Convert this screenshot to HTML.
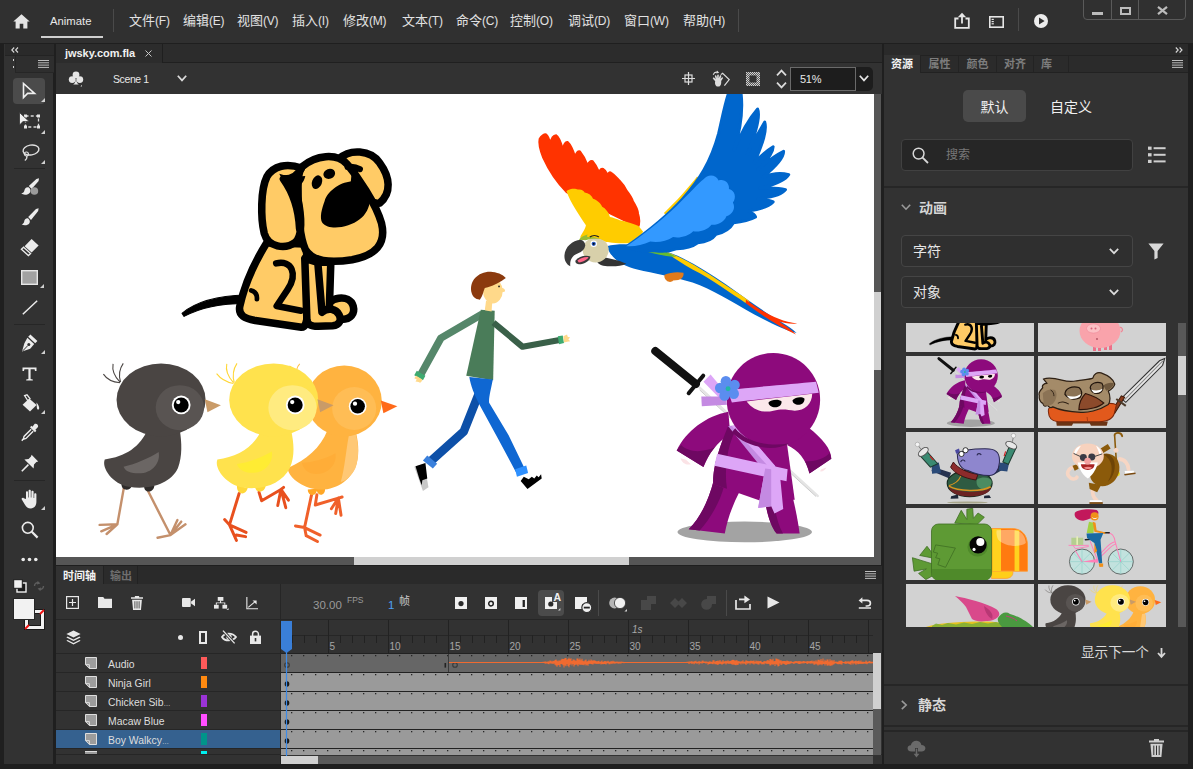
<!DOCTYPE html>
<html lang="zh-CN">
<head>
<meta charset="utf-8">
<title>Animate - jwsky.com.fla</title>
<style>
*{box-sizing:border-box;margin:0;padding:0}
html,body{width:1193px;height:769px;overflow:hidden;background:#1f1f1f}
body{position:relative;font-family:"Liberation Sans","Noto Sans CJK SC",sans-serif;font-size:13px;color:#dcdcdc;-webkit-font-smoothing:antialiased}
.abs{position:absolute}
svg{position:absolute;overflow:visible}
/* top bar */
#topbar{left:0;top:0;width:1193px;height:43px;background:#303030}
#topbar .mi{position:absolute;top:12px;height:18px;line-height:18px;font-size:13px;color:#e2e2e2;white-space:nowrap}
.vdiv{position:absolute;width:1px;background:#4a4a4a}
#winctl{left:1083px;top:-1px;width:103px;height:21px;border:1px solid #5a5a5a;border-radius:0 0 4px 4px;background:#303030}
/* left tools */
#tools{left:4px;top:44px;width:49px;height:720px;background:#323232}
/* doc */
#doctabs{left:56px;top:44px;width:826px;height:19px;background:#2c2c2c;border-bottom:1px solid #202020}
#doctab{left:0;top:0;width:107px;height:19px;background:#2c2c2c;border-right:1px solid #1f1f1f}
#scenebar{left:56px;top:63px;width:826px;height:31px;background:#323232}
#stage{left:56px;top:94px;width:818px;height:463px;background:#fff;overflow:hidden}
#vscroll{left:874px;top:94px;width:7px;height:463px;background:#565656}
#hscroll{left:56px;top:557px;width:825px;height:8px;background:#565656}
/* timeline */
#tl{left:56px;top:566px;width:826px;height:198px;background:#323232}
#tltabs{left:0;top:0;width:826px;height:18px;background:#2a2a2a}
/* right */
#rp{left:884px;top:44px;width:304px;height:720px;background:#323232}
.tab{position:absolute;top:11px;height:18px;line-height:19px;font-size:11px;color:#7d7d7d;text-align:center;border-right:1px solid #232323;background:#2b2b2b;font-weight:bold}
.dd{position:absolute;left:17px;width:232px;height:32px;border:1px solid #454545;border-radius:4px;background:#2f2f2f;font-size:14px;line-height:31px;padding-left:11px;color:#e6e6e6}
.thumb{position:absolute;width:128px;height:72px;background:#d2d2d2;overflow:hidden}
.lname{position:absolute;left:52px;font-size:10.4px;color:#dedede;line-height:21px;height:19px;white-space:nowrap}
</style>
</head>
<body>
<div id="topbar" class="abs">
  <svg style="left:13px;top:14px" width="17" height="15" viewBox="0 0 17 15"><path d="M8.5 0.3 L0.3 7.4 L2.6 7.4 L2.6 14.6 L6.7 14.6 L6.7 9.8 L10.3 9.8 L10.3 14.6 L14.4 14.6 L14.4 7.4 L16.7 7.4 Z" fill="#e4e4e4"/></svg>
  <div class="mi" style="left:50px;font-size:11.3px;color:#e8e8e8">Animate</div>
  <div class="abs" style="left:41px;top:36px;width:62px;height:2px;background:#cfcfcf"></div>
  <div class="vdiv" style="left:113px;top:9px;height:23px"></div>
  <div class="mi" style="left:129px">文件<span style="font-size:12px;letter-spacing:-0.2px">(F)</span></div>
  <div class="mi" style="left:183px">编辑<span style="font-size:12px;letter-spacing:-0.2px">(E)</span></div>
  <div class="mi" style="left:237px">视图<span style="font-size:12px;letter-spacing:-0.2px">(V)</span></div>
  <div class="mi" style="left:292px">插入<span style="font-size:12px;letter-spacing:-0.2px">(I)</span></div>
  <div class="mi" style="left:343px">修改<span style="font-size:12px;letter-spacing:-0.2px">(M)</span></div>
  <div class="mi" style="left:402px">文本<span style="font-size:12px;letter-spacing:-0.2px">(T)</span></div>
  <div class="mi" style="left:456px">命令<span style="font-size:12px;letter-spacing:-0.2px">(C)</span></div>
  <div class="mi" style="left:510px">控制<span style="font-size:12px;letter-spacing:-0.2px">(O)</span></div>
  <div class="mi" style="left:568px">调试<span style="font-size:12px;letter-spacing:-0.2px">(D)</span></div>
  <div class="mi" style="left:624px">窗口<span style="font-size:12px;letter-spacing:-0.2px">(W)</span></div>
  <div class="mi" style="left:683px">帮助<span style="font-size:12px;letter-spacing:-0.2px">(H)</span></div>
  <div class="vdiv" style="left:738px;top:9px;height:23px"></div>
  <!-- share -->
  <svg style="left:954px;top:12px" width="16" height="17" viewBox="0 0 16 17"><path d="M4.5 6.5 H1.2 V15.8 H14.8 V6.5 H11.5" fill="none" stroke="#e6e6e6" stroke-width="1.8"/><path d="M8 11.5 V3" stroke="#e6e6e6" stroke-width="1.8" fill="none"/><path d="M3.8 5.2 L8 0.8 L12.2 5.2 Z" fill="#e6e6e6"/></svg>
  <!-- layout -->
  <svg style="left:989px;top:16px" width="15" height="12" viewBox="0 0 15 12"><rect x="0.8" y="0.8" width="13.4" height="10.4" fill="none" stroke="#e6e6e6" stroke-width="1.6"/><rect x="2.6" y="2.8" width="2.2" height="1.2" fill="#e6e6e6"/><rect x="2.6" y="5" width="2.2" height="1.2" fill="#e6e6e6"/><rect x="2.6" y="7.2" width="2.2" height="1.2" fill="#e6e6e6"/></svg>
  <div class="vdiv" style="left:1018px;top:8px;height:23px"></div>
  <!-- play -->
  <svg style="left:1034px;top:14px" width="14" height="14" viewBox="0 0 14 14"><circle cx="7" cy="7" r="7" fill="#ececec"/><path d="M5 3.4 L10.6 7 L5 10.6 Z" fill="#303030"/></svg>
  <div id="winctl" class="abs">
    <div class="vdiv" style="left:27px;top:0;height:20px;background:#5a5a5a"></div>
    <div class="vdiv" style="left:54px;top:0;height:20px;background:#5a5a5a"></div>
    <div class="abs" style="left:8px;top:12px;width:11px;height:3px;background:#bcbcbc"></div>
    <div class="abs" style="left:36px;top:7px;width:11px;height:8px;border:2px solid #bcbcbc"></div>
    <svg style="left:73px;top:6px" width="11" height="9" viewBox="0 0 11 9"><path d="M1 0.8 L10 8.2 M10 0.8 L1 8.2" stroke="#bcbcbc" stroke-width="2.2"/></svg>
  </div>
</div>
<div id="tools" class="abs">
<div id="toolsin" class="abs" style="left:1px;top:0;width:48px;height:720px">
  <div class="abs" style="left:0;top:0;width:49px;height:11px;background:#2a2a2a"></div>
  <svg style="left:6px;top:3px" width="8" height="6" viewBox="0 0 8 6"><path d="M3.2 0.5 L0.8 3 L3.2 5.5 M7 0.5 L4.6 3 L7 5.5" fill="none" stroke="#d8d8d8" stroke-width="1.1"/></svg>
  <div class="abs" style="left:0;top:11px;width:49px;height:1px;background:#232323"></div>
  <div class="abs" style="left:10px;top:12px;width:39px;height:17px;background:#2e2e2e;border-left:1px solid #262626;border-bottom:1px solid #262626"></div>
  <div class="abs" style="left:8px;top:15px;width:1px;height:2px;background:#cfcfcf"></div>
  <div class="abs" style="left:8px;top:22px;width:1px;height:2px;background:#cfcfcf"></div>
  <svg style="left:33px;top:16px" width="11" height="8" viewBox="0 0 11 8"><path d="M0 0.5 H11 M0 2.8 H11 M0 5.1 H11 M0 7.4 H11" stroke="#bdbdbd" stroke-width="1"/></svg>
  <!-- selected tool bg -->
  <div class="abs" style="left:8px;top:34px;width:32px;height:26px;background:#4b4b4b;border-radius:4px"></div>
  <!-- selection arrow -->
  <svg style="left:17px;top:38px" width="14" height="18" viewBox="0 0 14 18"><path d="M1.5 1.5 L1.5 15.5 L5.6 11.4 L12.6 11.4 Z" fill="none" stroke="#f0f0f0" stroke-width="1.6" stroke-linejoin="miter"/></svg>
  <svg style="left:36px;top:54px" width="4" height="4" viewBox="0 0 4 4"><path d="M4 0 V4 H0 Z" fill="#d0d0d0"/></svg>
  <!-- free transform -->
  <svg style="left:14px;top:68px" width="22" height="18" viewBox="0 0 22 18"><rect x="6.5" y="4" width="13" height="11" fill="none" stroke="#d9d9d9" stroke-width="1.3" stroke-dasharray="3 2.2"/><rect x="5" y="2.5" width="3" height="3" fill="#e8e8e8"/><rect x="18" y="2.5" width="3" height="3" fill="#e8e8e8"/><rect x="18" y="13.5" width="3" height="3" fill="#e8e8e8"/><rect x="5" y="13.5" width="3" height="3" fill="#e8e8e8"/><path d="M0.5 0.5 L0.5 13 L4 9.6 L10.2 9.6 Z" fill="#f0f0f0" stroke="#323232" stroke-width="0.8"/></svg>
  <svg style="left:36px;top:86px" width="4" height="4" viewBox="0 0 4 4"><path d="M4 0 V4 H0 Z" fill="#d0d0d0"/></svg>
  <!-- lasso -->
  <svg style="left:15px;top:98px" width="20" height="20" viewBox="0 0 20 20"><ellipse cx="11" cy="8" rx="8" ry="4.9" transform="rotate(-10 11 8)" fill="none" stroke="#e0e0e0" stroke-width="1.4"/><circle cx="6.4" cy="12" r="2" fill="none" stroke="#e0e0e0" stroke-width="1.2"/><path d="M6.6 14 C7.4 15.8 6.4 17.4 4.8 18.4" fill="none" stroke="#e0e0e0" stroke-width="1.2"/></svg>
  <svg style="left:36px;top:116px" width="4" height="4" viewBox="0 0 4 4"><path d="M4 0 V4 H0 Z" fill="#d0d0d0"/></svg>
  <div class="abs" style="left:9px;top:124px;width:31px;height:1px;background:#262626"></div>
  <!-- fluid brush -->
  <svg style="left:15px;top:134px" width="20" height="18" viewBox="0 0 20 18"><path d="M19 0.3 L16.4 0.9 L8.8 8 L11.6 11 L18.6 3 Z" fill="#ececec"/><path d="M8.6 9.2 C6 8.8 4.6 10.6 4.4 12.6 C4.2 14.2 3 15.2 1.2 15.6 C4 17.6 8.4 16.8 10 14.4 C11 12.8 10.6 10.8 8.6 9.2 Z" fill="#ececec"/><circle cx="14.4" cy="13" r="3.8" fill="#9a9a9a"/></svg>
  <!-- brush -->
  <svg style="left:16px;top:164px" width="18" height="18" viewBox="0 0 18 18"><path d="M17.6 0.3 L15 0.9 L7.2 9 L10 12 L17.2 3 Z" fill="#ececec"/><path d="M7 10.2 C4.6 10 3.4 11.6 3.2 13.4 C3 14.8 2 15.8 0.6 16.2 C3 18 6.8 17.4 8.4 15.2 C9.4 13.6 8.8 11.6 7 10.2 Z" fill="#ececec"/></svg>
  <!-- eraser -->
  <svg style="left:15px;top:194px" width="20" height="18" viewBox="0 0 20 18"><path d="M11.6 1 L18.6 7.4 L11.6 14.6 L4.6 8.2 Z" fill="#ececec"/><path d="M3.6 9.2 L10.6 15.6 L8.4 17.6 L1.4 11.2 Z" fill="none" stroke="#ececec" stroke-width="1.3"/></svg>
  <!-- rectangle -->
  <svg style="left:16px;top:226px" width="17" height="15" viewBox="0 0 17 15"><rect x="0.7" y="0.7" width="15.6" height="13.6" fill="#a2a2a2" stroke="#e6e6e6" stroke-width="1.4"/></svg>
  <svg style="left:35px;top:240px" width="4" height="4" viewBox="0 0 4 4"><path d="M4 0 V4 H0 Z" fill="#d0d0d0"/></svg>
  <!-- line -->
  <svg style="left:17px;top:256px" width="16" height="15" viewBox="0 0 16 15"><path d="M0.8 14.2 L15.2 0.8" stroke="#ececec" stroke-width="1.5"/></svg>
  <div class="abs" style="left:9px;top:280px;width:31px;height:1px;background:#262626"></div>
  <!-- pen -->
  <svg style="left:16px;top:290px" width="18" height="19" viewBox="0 0 18 19"><path d="M9.4 0.6 L16.4 7 L14.2 9.2 L7.2 2.8 Z" fill="#ececec"/><path d="M6.4 3.8 L13.2 10 L9.2 14.8 L1 17.6 L3.4 9.2 Z" fill="#ececec"/><circle cx="7.8" cy="10.6" r="1.5" fill="#323232"/><path d="M1.6 17 L6.8 11.6" stroke="#323232" stroke-width="1"/></svg>
  <svg style="left:36px;top:306px" width="4" height="4" viewBox="0 0 4 4"><path d="M4 0 V4 H0 Z" fill="#d0d0d0"/></svg>
  <!-- text -->
  <svg style="left:17px;top:323px" width="15" height="14" viewBox="0 0 15 14"><path d="M0.5 0.5 H14.5 V4 H13 L12.6 2.2 H8.6 V12 L10.8 12.4 V13.5 H4.2 V12.4 L6.4 12 V2.2 H2.4 L2 4 H0.5 Z" fill="#ececec"/></svg>
  <!-- bucket -->
  <svg style="left:16px;top:350px" width="19" height="18" viewBox="0 0 19 18"><path d="M8.2 4.6 L15.6 11 L9 17.4 L1.6 10.8 Z" fill="#ececec"/><path d="M7 7 L3.6 1.6 L6 0.8 L9.4 5.2" fill="none" stroke="#ececec" stroke-width="1.3"/><path d="M15.4 8.4 C17.4 10.6 18.4 12.6 18.2 14.6 C18 16 16.2 16 16 14.6 C15.8 13 15.8 10.8 15.4 8.4 Z" fill="#ececec"/></svg>
  <svg style="left:36px;top:366px" width="4" height="4" viewBox="0 0 4 4"><path d="M4 0 V4 H0 Z" fill="#d0d0d0"/></svg>
  <!-- eyedropper -->
  <svg style="left:16px;top:379px" width="18" height="19" viewBox="0 0 18 19"><path d="M13.8 0.8 C15.6 0 17.8 2.2 17 4 L14.4 6.8 L15.4 7.8 L14 9.2 L9 4.2 L10.4 2.8 L11.4 3.8 Z" fill="#ececec"/><path d="M10.2 6.2 L3 13.4 L2.4 16.2 L5 15.4 L12.2 8.2" fill="none" stroke="#ececec" stroke-width="1.4"/><path d="M2.2 16 L0.8 17.8" stroke="#ececec" stroke-width="1.4"/></svg>
  <!-- pin -->
  <svg style="left:16px;top:410px" width="18" height="18" viewBox="0 0 18 18"><path d="M10.6 0.8 L17.2 7.4 L15.4 8 L13 10.4 L12.6 14.6 L3.4 5.4 L7.6 5 L10 2.6 Z" fill="#ececec"/><path d="M7.4 10.6 L0.8 17.2" stroke="#ececec" stroke-width="1.6"/></svg>
  <div class="abs" style="left:9px;top:436px;width:31px;height:1px;background:#262626"></div>
  <!-- hand -->
  <svg style="left:16px;top:445px" width="18" height="20" viewBox="0 0 18 20"><path d="M5 10 V3.4 C5 2 7 2 7 3.4 V8.4 H7.6 V1.8 C7.6 0.4 9.8 0.4 9.8 1.8 V8.4 H10.4 V2.8 C10.4 1.4 12.6 1.4 12.6 2.8 V9 H13.2 V5.4 C13.2 4 15.4 4 15.4 5.4 V12.6 C15.4 16.6 13.4 19.4 9.8 19.4 C6.8 19.4 5.4 18 3.8 15.4 L0.8 10.6 C0 9.2 1.8 8 2.8 9.2 Z" fill="#ececec"/></svg>
  <svg style="left:36px;top:462px" width="4" height="4" viewBox="0 0 4 4"><path d="M4 0 V4 H0 Z" fill="#d0d0d0"/></svg>
  <!-- zoom -->
  <svg style="left:16px;top:477px" width="18" height="18" viewBox="0 0 18 18"><circle cx="6.8" cy="6.8" r="5.4" fill="none" stroke="#ececec" stroke-width="1.6"/><path d="M10.8 10.8 L16.6 16.6" stroke="#ececec" stroke-width="2.2"/></svg>
  <!-- dots -->
  <svg style="left:16px;top:513px" width="17" height="5" viewBox="0 0 17 5"><circle cx="2.2" cy="2.5" r="1.8" fill="#ececec"/><circle cx="8.5" cy="2.5" r="1.8" fill="#ececec"/><circle cx="14.8" cy="2.5" r="1.8" fill="#ececec"/></svg>
  <!-- default colors -->
  <svg style="left:8px;top:535px" width="14" height="14" viewBox="0 0 14 14"><rect x="4" y="4" width="9" height="9" fill="#1a1a1a" stroke="#f0f0f0" stroke-width="1.4"/><rect x="0.7" y="0.7" width="8.6" height="8.6" fill="#f0f0f0" stroke="#1a1a1a" stroke-width="1"/></svg>
  <svg style="left:28px;top:536px" width="12" height="12" viewBox="0 0 12 12"><path d="M1.5 6 C1.5 3 4 2 6 3.4 M10.5 6 C10.5 9 8 10 6 8.6" fill="none" stroke="#5e5e5e" stroke-width="1.4"/><path d="M4.6 0.8 L7.4 3.6 L4 4.6 Z M7.4 11.2 L4.6 8.4 L8 7.4 Z" fill="#5e5e5e"/></svg>
  <!-- stroke swatch -->
  <div class="abs" style="left:19px;top:565px;width:21px;height:21px;background:#f2f2f2;border:1px solid #1a1a1a"></div>
  <div class="abs" style="left:23px;top:569px;width:13px;height:13px;background:#3a3a3a;border:1px solid #1a1a1a"></div>
  <svg style="left:19px;top:565px" width="21" height="21" viewBox="0 0 21 21"><path d="M1 20 L5 16 M16 5 L20 1" stroke="#e11" stroke-width="1.8"/></svg>
  <!-- fill swatch -->
  <div class="abs" style="left:8px;top:554px;width:22px;height:22px;background:#f2f2f2;border:1px solid #262626"></div>
</div>
</div>
<div id="doctabs" class="abs">
  <div id="doctab" class="abs">
    <div class="abs" style="left:9px;top:0;height:19px;line-height:18px;font-size:11px;font-weight:bold;color:#f0f0f0;letter-spacing:-0.05px">jwsky.com.fla</div>
    <svg style="left:89px;top:6px" width="7" height="7" viewBox="0 0 7 7"><path d="M0.5 0.5 L6.5 6.5 M6.5 0.5 L0.5 6.5" stroke="#c8c8c8" stroke-width="1"/></svg>
  </div>
</div>
<div id="scenebar" class="abs">
  <!-- club / scene icon -->
  <svg style="left:12px;top:8px" width="16" height="16" viewBox="0 0 16 16"><circle cx="8" cy="3.8" r="3.4" fill="#e6e6e6"/><circle cx="4.2" cy="8.6" r="3.4" fill="#e6e6e6"/><circle cx="11.8" cy="8.6" r="3.4" fill="#e6e6e6"/><path d="M8 6 C8 10 9 12.4 10.8 13.4 H5.2 C7 12.4 8 10 8 6 Z" fill="#e6e6e6"/><path d="M14 13.8 V15.4 H12.4 Z" fill="#d0d0d0"/></svg>
  <div class="abs" style="left:57px;top:8px;height:16px;line-height:16px;font-size:10.5px;letter-spacing:-0.4px;color:#e8e8e8">Scene 1</div>
  <svg style="left:121px;top:12px" width="10" height="7" viewBox="0 0 10 7"><path d="M0.8 0.8 L5 5.4 L9.2 0.8" fill="none" stroke="#dcdcdc" stroke-width="1.7"/></svg>
  <!-- center stage -->
  <svg style="left:626px;top:9px" width="13" height="13" viewBox="0 0 13 13"><rect x="3" y="3" width="7" height="7" fill="none" stroke="#dcdcdc" stroke-width="1.2"/><path d="M6.5 0 V13 M0 6.5 H13" stroke="#dcdcdc" stroke-width="1.2"/></svg>
  <!-- rotate hand -->
  <svg style="left:656px;top:7px" width="19" height="18" viewBox="0 0 19 18"><path d="M8.8 4.6 L10.6 3.2 L17.2 9.6 L12.4 15.6" fill="none" stroke="#dcdcdc" stroke-width="1.2"/><path d="M3.2 11.2 L1 8.7 C0.4 7.8 1.6 6.9 2.3 7.7 L3.7 9.2 L2.9 6.2 C2.7 5.1 4.2 4.8 4.5 5.9 L5.1 8.3 L5.2 5.3 C5.3 4.2 6.9 4.3 6.8 5.4 L6.7 8.3 L7.8 5.8 C8.2 4.8 9.6 5.4 9.2 6.4 L8.3 9 L9.8 7.5 C10.6 6.8 11.5 7.9 10.8 8.6 L9.2 11 C9.4 14 8.8 16.6 6.2 16.6 C3.4 16.6 2.6 13.6 3.2 11.2 Z" fill="#dcdcdc"/><path d="M1.2 4.8 C2 2.8 3.8 1.8 5.6 2.4" fill="none" stroke="#dcdcdc" stroke-width="1.1"/><path d="M5 0.6 L7.2 2.8 L4.4 3.6 Z" fill="#dcdcdc"/></svg>
  <!-- clip -->
  <svg style="left:690px;top:9px" width="14" height="14" viewBox="0 0 14 14"><defs><pattern id="chk" width="2" height="2" patternUnits="userSpaceOnUse"><rect width="1" height="1" fill="#d0d0d0"/><rect x="1" y="1" width="1" height="1" fill="#d0d0d0"/></pattern></defs><rect width="14" height="14" fill="#5a5a5a"/><rect width="14" height="14" fill="url(#chk)"/><rect x="3.5" y="3.5" width="7" height="7" fill="#323232"/></svg>
  <!-- stepper -->
  <svg style="left:720px;top:6px" width="11" height="20" viewBox="0 0 11 20"><path d="M1 6.4 L5.5 1.6 L10 6.4 M1 13.6 L5.5 18.4 L10 13.6" fill="none" stroke="#dcdcdc" stroke-width="1.7"/></svg>
  <div class="abs" style="left:734px;top:4px;width:83px;height:24px;background:#1d1d1d;border-radius:0 5px 5px 0"></div>
  <div class="abs" style="left:734px;top:4px;width:66px;height:24px;background:#1d1d1d;border:1px solid #6a6a6a"></div>
  <div class="abs" style="left:744px;top:8px;height:16px;line-height:16px;font-size:11px;color:#e8e8e8;letter-spacing:-0.3px">51%</div>
  <svg style="left:803px;top:12px" width="10" height="7" viewBox="0 0 10 7"><path d="M0.8 0.8 L5 5.4 L9.2 0.8" fill="none" stroke="#e6e6e6" stroke-width="1.7"/></svg>
</div>
<div id="vscroll" class="abs"><div class="abs" style="left:0;top:198px;width:7px;height:78px;background:#d0d0d0"></div></div>
<div id="hscroll" class="abs"><div class="abs" style="left:298px;top:0;width:275px;height:8px;background:#d0d0d0"></div></div>
<div id="stage" class="abs">
<!--STAGE--><svg style="left:0;top:0" width="818" height="463" viewBox="56 94 818 463"><g id="dog" transform="translate(170 140) scale(0.2602)">
<g fill="#FFCB66" stroke="#000" stroke-width="29" stroke-linejoin="round" stroke-linecap="round">
<path d="M46 666 C100 622 190 598 290 596 L290 628 C200 628 120 642 54 678 Z" fill="#000" stroke-width="4"/>
<!-- paw 2 (behind) -->
<path d="M598 655 C606 600 690 590 704 638 C712 668 694 690 660 690 L606 690 Z"/>
<!-- leg 2 -->
<path d="M556 470 L618 470 L612 660 L566 660 Z"/>
<!-- body -->
<path d="M372 395 C325 470 285 560 268 640 C262 675 288 686 328 694 L505 720 C520 720 528 700 527 660 L530 470 L520 400 Z"/>
<!-- leg 1 + paw 1 -->
<path d="M518 455 L526 690 C528 712 545 716 570 716 L625 714 C652 712 660 692 650 672 C638 648 606 642 584 662 L568 470 Z"/>
<!-- haunch "2" -->
<path d="M408 474 C468 460 492 515 452 575 L410 638 L504 656" fill="none" stroke-width="25"/>
<path d="M312 578 C326 582 336 590 334 612" fill="none" stroke-width="18"/>
<!-- right ear -->
<path d="M650 72 C690 34 770 36 806 88 C846 142 852 204 806 242 C770 250 720 200 700 150 Z"/>
<!-- head -->
<path d="M508 102 C560 58 640 48 680 92 C720 140 790 240 813 320 C832 400 790 443 700 460 C620 473 548 468 520 420 C496 370 492 250 492 180 C492 140 496 117 508 102 Z"/>
<!-- left ear -->
<path d="M505 108 C450 88 397 98 372 142 C348 190 348 300 362 358 C377 412 442 422 482 393 C508 368 504 300 496 250 C488 200 472 168 440 150 C472 150 495 130 505 108 Z"/>
</g>
<!-- smile -->
<path d="M420 130 C450 140 490 140 520 138 C514 166 498 178 480 178 C456 178 434 162 420 130 Z" fill="#000"/>
<path d="M436 150 C472 200 494 260 498 340" fill="none" stroke="#000" stroke-width="29" stroke-linecap="round"/>
<!-- brow -->
<path d="M682 104 C700 100 716 104 730 112" fill="none" stroke="#000" stroke-width="23" stroke-linecap="round"/>
<path d="M712 110 L706 176" fill="none" stroke="#000" stroke-width="25"/>
<!-- nose -->
<path d="M594 235 C611 181 690 142 739 166 C783 189 778 269 729 305 C689 337 611 350 586 319 C573 299 584 262 594 235 Z" fill="#000"/>
<ellipse cx="565" cy="162" rx="19" ry="27" transform="rotate(22 565 162)" fill="#000"/>
<ellipse cx="612" cy="130" rx="23" ry="19" transform="rotate(-20 612 130)" fill="#000"/>
</g>
<g id="boy" transform="translate(405 262) scale(0.3093)">
<!-- back arm -->
<path d="M250 168 L116 246 L52 362" fill="none" stroke="#55876A" stroke-width="24" stroke-linejoin="round"/>
<path d="M38 352 L66 368 L58 382 L30 366 Z" fill="#3DAA70"/>
<path d="M36 368 L56 380 C54 390 48 392 44 388 L34 386 L38 380 L30 376 Z" fill="#FFD98A"/>
<!-- back leg -->
<path d="M252 392 L190 548 L82 645" fill="none" stroke="#0D50A8" stroke-width="28" stroke-linejoin="round"/>
<path d="M72 626 L104 652 L90 668 L58 642 Z" fill="#3A80DC"/>
<path d="M30 662 L62 652 L76 728 L58 740 Z" fill="#C8C8C8"/>
<path d="M34 660 L66 650 L72 700 L56 706 L54 722 L46 700 Z" fill="#000"/>
<!-- torso -->
<path d="M245 154 L290 158 L285 382 L198 368 Z" fill="#4A7C59"/>
<!-- front leg -->
<path d="M208 372 L284 380 C278 410 270 440 272 455 L335 560 L388 670 L360 682 L300 570 L240 460 C225 430 212 400 208 372 Z" fill="#0F67D2"/>
<path d="M356 670 L392 658 L398 682 L362 694 Z" fill="#2E90FF"/>
<path d="M374 708 L384 694 L400 702 L410 694 L418 700 L426 690 L432 696 L440 686 L442 700 L396 734 Z" fill="#000"/>
<!-- front arm -->
<path d="M286 196 L380 274 L500 252" fill="none" stroke="#3A6049" stroke-width="20" stroke-linejoin="round"/>
<path d="M494 240 L510 238 L514 262 L498 266 Z" fill="#3DAA70"/>
<path d="M512 240 L524 234 L526 242 L534 244 L528 250 L534 256 L524 258 L514 260 Z" fill="#FFD98A"/>
<!-- neck + head -->
<path d="M262 125 L282 130 L280 160 L258 156 Z" fill="#FFD98A"/>
<ellipse cx="284" cy="94" rx="32" ry="40" fill="#FFD98A"/>
<path d="M312 84 C320 84 326 90 322 96 L312 98 Z" fill="#FFD98A"/>
<path d="M216 102 C204 60 240 28 282 32 C306 34 320 44 326 52 C310 64 290 76 268 82 L258 84 C252 96 252 110 242 122 C226 120 220 112 216 102 Z" fill="#8B3A0E"/>
<circle cx="304" cy="79" r="3" fill="#222"/>
</g>
<g id="chicks" transform="translate(90 350) scale(0.2682)">
<!-- orange chick -->
<g stroke="#F0602A" stroke-width="11" fill="none" stroke-linecap="round" stroke-linejoin="round">
<path d="M826 540 L800 662 M800 662 L766 656 M800 662 L806 692 M800 662 L858 690 M806 692 L848 714"/>
<path d="M846 540 L840 578 L926 552 M926 552 L900 592 M926 552 L940 548 M926 552 L936 616 M926 552 L916 610"/>
</g>
<path d="M812 520 C812 545 842 548 846 525 C850 548 880 545 876 515 Z" fill="#FFA726"/>
<path d="M885 300 C860 365 805 410 738 440 C735 470 790 515 850 520 C920 525 980 480 995 420 C1005 380 1000 340 990 300 Z" fill="#FFB340"/>
<path d="M990 310 C1002 350 1004 400 990 440 C975 470 950 490 935 492 C950 440 955 370 965 320 Z" fill="#FFC875"/>
<path d="M790 420 C830 420 880 405 915 385 C922 425 890 462 845 462 C815 462 795 445 790 420 Z" fill="#FFAD38"/>
<ellipse cx="948" cy="190" rx="140" ry="132" fill="#FFB340"/>
<ellipse cx="985" cy="218" rx="82" ry="80" fill="#FFBD55"/>
<path d="M1084 188 L1146 210 L1094 236 Z" fill="#FF6A1A"/>
<circle cx="998" cy="210" r="33" fill="#fff"/><circle cx="998" cy="210" r="27" fill="#000"/><circle cx="988" cy="200" r="8" fill="#fff"/>
<path d="M770 75 C772 65 776 58 782 52 M760 78 C756 70 752 64 744 60" stroke="#FFC14D" stroke-width="4" fill="none"/>
<!-- yellow chick -->
<g stroke="#E8501E" stroke-width="11" fill="none" stroke-linecap="round" stroke-linejoin="round">
<path d="M556 535 L520 652 M520 652 L502 632 M520 652 L582 680 M520 652 L546 710 M546 690 L580 696"/>
<path d="M630 530 L640 562 L712 520 M712 520 L722 512 M712 520 L740 560 M712 520 L730 588 M712 520 L700 580"/>
</g>
<path d="M548 505 C545 540 582 545 588 515 Z M616 510 C616 535 652 535 655 505 Z" fill="#FFD83A"/>
<path d="M640 295 C615 360 550 400 475 408 C462 440 505 500 565 512 C640 525 715 500 745 440 C765 395 760 345 750 300 Z" fill="#FFE24D"/>
<path d="M548 425 C590 420 640 400 678 378 C685 420 652 458 605 458 C575 458 555 445 548 425 Z" fill="#FFEC33"/>
<ellipse cx="685" cy="186" rx="166" ry="136" fill="#FFE24D"/>
<ellipse cx="755" cy="215" rx="90" ry="84" fill="#FFEB80"/>
<path d="M848 184 L908 206 L858 232 Z" fill="#C99B68"/>
<circle cx="765" cy="205" r="35" fill="#fff"/><circle cx="765" cy="205" r="28" fill="#000"/><circle cx="754" cy="194" r="8" fill="#fff"/>
<path d="M535 125 C510 120 485 105 472 88 M535 122 C515 100 505 75 510 52 M538 122 C530 95 535 70 548 50" stroke="#FFD633" stroke-width="4" fill="none"/>
<!-- black chick -->
<g stroke="#C4906C" stroke-width="9" fill="none" stroke-linecap="round" stroke-linejoin="round">
<path d="M126 515 L102 650 M102 650 L36 652 M102 650 L42 676 M102 650 L62 686"/>
<path d="M216 525 L300 690 M300 690 L252 700 M300 690 L326 634 M300 690 L356 650 M300 690 L340 640"/>
</g>
<path d="M118 495 C112 525 150 530 156 505 Z M202 508 C200 535 238 535 240 505 Z" fill="#2E2B2A"/>
<path d="M215 295 C190 360 130 400 55 408 C42 440 85 500 145 510 C220 522 300 500 328 440 C345 395 342 345 335 300 Z" fill="#4A4543"/>
<path d="M125 435 C170 425 222 402 256 380 C264 420 232 460 182 460 C152 460 132 452 125 435 Z" fill="#6B6664"/>
<ellipse cx="265" cy="186" rx="166" ry="136" fill="#4A4543"/>
<ellipse cx="335" cy="215" rx="90" ry="84" fill="#595452"/>
<path d="M428 184 L488 206 L438 232 Z" fill="#C99B68"/>
<circle cx="340" cy="205" r="35" fill="#fff"/><circle cx="340" cy="205" r="28" fill="#000"/><circle cx="329" cy="194" r="8" fill="#fff"/>
<path d="M112 122 C85 120 62 108 50 90 M112 120 C92 100 82 75 86 52 M114 120 C106 95 110 70 124 50" stroke="#4A4543" stroke-width="4" fill="none"/>
</g>
<g id="ninja" transform="translate(645 338) scale(0.2732)">
<ellipse cx="365" cy="710" rx="246" ry="38" fill="#A3A3A3"/>
<!-- sword -->
<path d="M196 178 L632 578" stroke="#E4E4E4" stroke-width="9" stroke-linecap="round"/>
<path d="M200 190 L626 580" stroke="#BDBDBD" stroke-width="3"/>
<path d="M38 48 L186 168" stroke="#111" stroke-width="30" stroke-linecap="round"/>
<path d="M160 202 L213 138" stroke="#111" stroke-width="15" stroke-linecap="round"/>
<!-- arms -->
<path d="M305 270 C225 285 150 340 116 412 L214 472 C236 420 262 382 312 352 Z" fill="#8D0A7C"/>
<path d="M116 412 L214 472 C226 440 240 418 256 400 C210 420 160 420 132 392 Z" fill="#6E0862"/>
<path d="M598 328 C650 368 682 408 682 442 L602 496 C588 442 562 412 520 392 Z" fill="#8D0A7C"/>
<path d="M682 442 L602 496 C598 478 592 464 586 452 C625 452 660 440 676 420 Z" fill="#6E0862"/>
<path d="M130 440 C136 458 150 466 168 462 L150 446 Z M640 488 C650 490 660 484 664 474 L646 480 Z" fill="#FBE3E6"/>
<!-- legs -->
<path d="M252 520 C232 600 200 660 160 700 L292 716 C302 660 322 610 345 565 Z" fill="#8D0A7C"/>
<path d="M252 520 C232 600 200 660 160 700 L200 705 C240 660 275 600 290 540 Z" fill="#6E0862"/>
<path d="M438 585 C445 640 460 690 482 716 L566 716 C560 670 550 620 540 580 Z" fill="#8D0A7C"/>
<path d="M438 585 C445 640 460 690 482 716 L505 716 C485 680 475 630 472 590 Z" fill="#6E0862"/>
<!-- torso -->
<path d="M305 320 C272 400 245 480 250 535 L420 595 L548 592 L520 390 Z" fill="#8D0A7C"/>
<path d="M305 320 C272 400 245 480 250 535 L300 552 C290 480 300 400 330 340 Z" fill="#6E0862"/>
<!-- strap + belt -->
<path d="M304 322 L346 318 L478 470 L436 486 Z" fill="#C48AE2"/>
<path d="M318 322 L346 318 L478 470 L458 478 Z" fill="#DDA6F7"/>
<path d="M264 424 L522 480 L518 524 L254 468 Z" fill="#DDA6F7"/>
<path d="M440 478 L492 480 L506 626 L474 642 L462 616 L414 622 Z" fill="#DDA6F7"/>
<path d="M440 478 L462 480 L462 616 L414 622 Z" fill="#C48AE2"/>
<!-- head -->
<circle cx="470" cy="226" r="171" fill="#8D0A7C"/>
<path d="M330 330 C370 380 450 400 530 385 C470 420 370 400 318 345 Z" fill="#6E0862"/>
<!-- face -->
<path d="M372 232 L612 204 C612 240 585 266 548 266 C520 262 500 258 470 266 C430 276 395 262 372 232 Z" fill="#FBE8EA"/>
<path d="M452 236 C452 258 500 262 500 232 C490 222 462 224 452 236 Z" fill="#000"/>
<path d="M540 228 C540 250 584 252 584 222 C574 214 550 216 540 228 Z" fill="#000"/>
<!-- headband -->
<path d="M292 196 L240 134 L214 160 L280 228 Z" fill="#DDA6F7"/>
<path d="M296 214 L206 214 L208 250 L300 244 Z" fill="#C48AE2"/>
<path d="M302 190 C400 180 540 168 626 160 L636 200 C540 212 420 224 318 236 Z" fill="#DDA6F7"/>
<!-- flower -->
<g fill="#5B8DEF"><circle cx="304" cy="186" r="16"/><circle cx="296" cy="158" r="19"/><circle cx="328" cy="172" r="19"/><circle cx="325" cy="204" r="19"/><circle cx="291" cy="211" r="19"/><circle cx="275" cy="183" r="19"/></g>
<circle cx="304" cy="186" r="9" fill="#22B5A8"/>
</g>
<g id="parrot" transform="translate(530 94) scale(0.3251)">
<!-- far wing red -->
<path d="M29 138 C34 128 44 122 50 124 C56 128 60 140 63 152 C64 136 72 126 80 126 C90 132 96 150 101 168 C104 152 110 146 116 147 C126 156 134 176 139 192 C142 180 148 175 154 176 C164 188 172 204 177 218 C182 206 188 204 193 206 C202 216 208 228 213 240 C216 230 220 228 225 230 C232 234 236 240 239 248 C242 240 246 239 250 242 C260 248 268 258 276 266 C286 276 294 288 298 298 C306 308 314 320 317 330 C326 344 332 356 333 368 C338 384 338 398 333 410 L112 302 C90 280 60 240 40 196 C30 170 26 150 29 138 Z" fill="#FF3300" stroke="#FF3300" stroke-width="5" stroke-linejoin="round"/>
<!-- far wing yellow -->
<path d="M112 298 C125 290 140 290 147 294 C158 292 166 298 168 303 C180 305 190 312 194 322 C206 326 218 336 222 347 C232 352 242 364 246 378 C256 380 268 384 276 388 C300 392 320 400 334 406 L348 424 C340 438 320 452 306 458 C270 462 230 454 212 448 C190 440 170 438 154 442 C160 427 170 417 172 404 C150 370 125 335 112 298 Z" fill="#FFCC00"/>
<!-- tail / body -->
<path d="M236 468 C300 452 400 470 470 505 C560 550 650 620 720 668 C760 695 800 715 820 735 C790 728 740 705 690 678 C620 640 560 600 500 580 C440 562 380 552 330 540 C290 530 250 510 236 468 Z" fill="#0066CC"/>
<path d="M420 486 C480 505 560 560 620 600 C650 620 668 630 676 640 L662 642 C620 615 560 570 500 540 C470 522 440 505 420 486 Z" fill="#FFCC00"/>
<path d="M320 466 C360 470 410 480 450 500 C430 502 380 492 340 480 Z" fill="#66BB33"/>
<path d="M664 632 C700 660 760 700 822 706 C800 708 780 704 766 700 C790 716 808 728 818 740 C770 716 710 680 664 644 Z" fill="#FF3300"/>
<!-- feet -->
<path d="M414 556 C430 548 456 546 472 550 C474 560 468 570 456 572 L440 574 C436 580 426 580 420 574 C414 568 412 562 414 556 Z" fill="#E07A1A"/>
<!-- head -->
<path d="M215 500 C240 505 270 510 296 522 C280 530 250 532 225 528 C205 524 200 510 215 500 Z" fill="#333"/>
<ellipse cx="202" cy="480" rx="40" ry="38" fill="#D8D0AA"/>
<path d="M150 448 C160 436 176 430 196 432 C210 434 224 440 234 450 C214 444 190 444 172 450 Z" fill="#99BB33"/>
<path d="M176 432 C196 424 230 430 250 450 L236 456 C220 444 196 438 176 440 Z" fill="#FFCC00"/>
<path d="M156 448 C130 450 108 470 106 496 C105 512 112 524 124 530 C122 510 130 496 148 490 C160 486 168 478 170 466 C170 456 164 450 156 448 Z" fill="#3A3A3A"/>
<path d="M140 512 C150 500 170 494 186 500 C184 514 168 524 150 524 C142 522 138 518 140 512 Z" fill="#3A3A3A"/>
<path d="M146 512 C156 504 170 500 180 502 C176 510 164 516 150 518 Z" fill="#FF6688"/>
<circle cx="196" cy="461" r="10" fill="#fff"/><circle cx="196" cy="461" r="6.5" fill="#2255BB"/><circle cx="196" cy="461" r="3" fill="#000"/>
<path d="M184 440 C192 434 204 434 212 440" fill="none" stroke="#222" stroke-width="4"/>
<!-- near wing yellow edge -->
<path d="M412 366 C452 328 488 288 514 254 L530 275 C500 315 465 350 430 385 Z" fill="#FFCC00"/>
<!-- near wing dark blue -->
<path d="M296 470 C350 432 420 378 470 322 C520 266 556 210 580 122 C592 72 600 24 614 -12 L648 -12 C656 40 648 108 628 172 C646 128 672 78 700 46 C708 64 700 108 668 186 C686 148 706 112 722 86 C730 110 716 152 690 212 C708 192 728 174 748 162 C748 180 730 204 700 234 C728 208 756 188 780 176 C782 196 758 222 716 256 C744 244 774 242 796 248 C786 266 750 280 706 290 C734 288 764 288 786 294 C776 308 742 318 700 322 C718 324 736 326 748 332 C732 348 700 356 672 360 C684 366 692 372 694 378 C672 390 646 394 626 396 C616 414 596 426 572 432 C562 446 540 456 516 458 C500 470 478 476 452 476 C432 484 408 486 384 482 C356 484 322 480 296 470 Z" fill="#0066CC" stroke="#0066CC" stroke-width="9" stroke-linejoin="round"/>
<!-- near wing light blue -->
<path d="M296 468 C340 440 400 392 450 345 C490 306 520 272 534 262 C546 246 572 246 580 266 C598 260 614 274 612 292 C630 296 636 318 624 334 C634 352 622 372 604 376 C598 394 576 404 558 402 C546 418 522 426 502 422 C486 438 460 444 440 440 C420 454 392 458 370 454 C346 466 318 470 296 468 Z" fill="#3399FF"/>
</g>
</svg><!--/STAGE-->
</div>
<div id="tl" class="abs">
<div id="tltabs" class="abs">
<div class="abs" style="left:0;top:0;width:47px;height:18px;background:#323232;font-size:11px;font-weight:bold;color:#f2f2f2;line-height:20px;padding-left:7px">时间轴</div>
<div class="abs" style="left:47px;top:0;width:35px;height:18px;background:#2b2b2b;border-left:1px solid #222;border-right:1px solid #222;font-size:11px;font-weight:bold;color:#6f6f6f;line-height:20px;padding-left:6px">输出</div>
<svg style="left:809px;top:5px" width="11" height="8" viewBox="0 0 11 8"><path d="M0 0.5 H11 M0 2.8 H11 M0 5.1 H11 M0 7.4 H11" stroke="#bdbdbd" stroke-width="1"/></svg>
</div>
<div class="abs" style="left:0;top:53px;width:826px;height:1px;background:#262626"></div>
<div class="abs" style="left:224px;top:18px;width:1px;height:180px;background:#262626"></div>
<svg style="left:10px;top:30px" width="13" height="13" viewBox="0 0 13 13"><rect x="0.6" y="0.6" width="11.8" height="11.8" fill="none" stroke="#e8e8e8" stroke-width="1.2"/><path d="M6.5 3 V10 M3 6.5 H10" stroke="#e8e8e8" stroke-width="1.2"/></svg>
<svg style="left:42px;top:31px" width="14" height="11" viewBox="0 0 15 11" preserveAspectRatio="none"><path d="M0 0 H5.6 L7 1.8 H15 V11 H0 Z" fill="#e8e8e8"/></svg>
<svg style="left:75px;top:30px" width="12" height="14" viewBox="0 0 13 15"><path d="M4.2 0 H8.8 V1.4 H13 V3 H0 V1.4 H4.2 Z" fill="#e8e8e8"/><path d="M1.2 4 H11.8 L10.8 15 H2.2 Z" fill="#e8e8e8"/><path d="M4.2 5.6 V13.4 M6.5 5.6 V13.4 M8.8 5.6 V13.4" stroke="#323232" stroke-width="0.9"/></svg>
<svg style="left:126px;top:32px" width="13" height="9" viewBox="0 0 14 10" preserveAspectRatio="none"><rect x="0" y="0" width="9.4" height="10" rx="1" fill="#e8e8e8"/><path d="M9.8 4 L14 0.8 V9.2 L9.8 6 Z" fill="#e8e8e8"/></svg>
<svg style="left:158px;top:31px" width="15" height="13" viewBox="0 0 16 15" preserveAspectRatio="none"><rect x="4" y="0" width="6" height="4.4" fill="#e8e8e8"/><rect x="0" y="9" width="5" height="4.4" fill="#e8e8e8"/><rect x="9" y="9" width="5" height="4.4" fill="#e8e8e8"/><path d="M7 4 V6.8 M2.5 9 V6.8 H11.5 V9" fill="none" stroke="#e8e8e8" stroke-width="1.1"/><path d="M15.6 12.6 V15 H13.2 Z" fill="#d0d0d0"/></svg>
<svg style="left:190px;top:31px" width="12" height="13" viewBox="0 0 14 15" preserveAspectRatio="none"><path d="M1 0 V13.6 H14" fill="none" stroke="#e8e8e8" stroke-width="1.3"/><path d="M2.6 12 L11 5" stroke="#e8e8e8" stroke-width="1.3"/><path d="M7.6 4 H12.4 V8.6 Z" fill="#e8e8e8"/></svg>
<div class="abs" style="left:257px;top:32px;font-size:11.5px;color:#9a9a9a;line-height:14px">30.00</div>
<div class="abs" style="left:291px;top:29px;font-size:8.5px;color:#9a9a9a;line-height:10px">FPS</div>
<div class="abs" style="left:332px;top:32px;font-size:11.5px;color:#4ea1f5;line-height:14px">1</div>
<div class="abs" style="left:343px;top:28px;font-size:11px;color:#c8c8c8;line-height:14px">帧</div>
<svg style="left:399px;top:31px" width="12" height="12" viewBox="0 0 12 12"><rect width="12" height="12" fill="#f0f0f0"/><circle cx="6" cy="6.6" r="2.6" fill="#2a2a2a"/></svg>
<svg style="left:429px;top:31px" width="12" height="12" viewBox="0 0 12 12"><rect width="12" height="12" fill="#f0f0f0"/><circle cx="6" cy="6.6" r="2.3" fill="none" stroke="#222" stroke-width="1.5"/></svg>
<svg style="left:459px;top:31px" width="12" height="12" viewBox="0 0 12 12"><rect width="12" height="12" fill="#f0f0f0"/><rect x="7.6" y="3" width="2.3" height="7" fill="#222"/></svg>
<div class="abs" style="left:482px;top:24px;width:26px;height:26px;background:#4b4b4b;border-radius:4px"></div>
<svg style="left:489px;top:27px" width="16" height="18" viewBox="0 0 16 18"><rect x="0" y="4" width="12" height="12" fill="#f0f0f0"/><circle cx="5.8" cy="11" r="2.6" fill="#2a2a2a"/><rect x="7" y="0" width="9" height="9" fill="#4b4b4b"/><text x="8.4" y="8.2" font-family="Liberation Sans,sans-serif" font-size="10.5" font-weight="bold" fill="#f0f0f0">A</text><path d="M15.4 15 V17.4 H13 Z" fill="#d0d0d0"/></svg>
<svg style="left:519px;top:31px" width="17" height="16" viewBox="0 0 17 16"><path d="M0 0 H12 V7 H7 V12 H0 Z" fill="#f0f0f0"/><circle cx="11.8" cy="10.6" r="5" fill="#f0f0f0" stroke="#323232" stroke-width="1.2"/><rect x="8.8" y="9.7" width="6" height="1.8" fill="#222"/></svg>
<div class="abs" style="left:542px;top:24px;width:1px;height:26px;background:#4a4a4a"></div>
<svg style="left:553px;top:31px" width="19" height="15" viewBox="0 0 19 15"><circle cx="5.6" cy="6" r="5.4" fill="#b5b5b5"/><circle cx="11" cy="6" r="5.6" fill="#f0f0f0" stroke="#323232" stroke-width="0.8"/><path d="M18 12 V14.6 H15.4 Z" fill="#d0d0d0"/></svg>
<svg style="left:585px;top:30px" width="15" height="14" viewBox="0 0 15 14"><rect x="0" y="4" width="10" height="10" fill="#484848"/><rect x="6" y="0" width="9" height="8" fill="#484848"/></svg>
<svg style="left:614px;top:31px" width="17" height="12" viewBox="0 0 17 12"><path d="M0 6 L5 1 L8.5 4.4 L12 1 L17 6 L12 11 L8.5 7.6 L5 11 Z" fill="#484848"/></svg>
<svg style="left:645px;top:30px" width="15" height="14" viewBox="0 0 15 14"><circle cx="5.6" cy="8.4" r="5.4" fill="#484848"/><rect x="6" y="0" width="9" height="8" fill="#484848"/></svg>
<div class="abs" style="left:670px;top:24px;width:1px;height:26px;background:#4a4a4a"></div>
<svg style="left:679px;top:29px" width="16" height="15" viewBox="0 0 16 15"><path d="M1 5 V14 H15 V9" fill="none" stroke="#e8e8e8" stroke-width="1.7"/><path d="M4 4.4 H10" stroke="#e8e8e8" stroke-width="1.8"/><path d="M9.4 0.6 L15 4.4 L9.4 8.2 Z" fill="#e8e8e8"/></svg>
<svg style="left:711px;top:30px" width="13" height="13" viewBox="0 0 13 13"><path d="M0.5 0.5 L12.5 6.5 L0.5 12.5 Z" fill="#e8e8e8"/></svg>
<svg style="left:802px;top:31px" width="14" height="12" viewBox="0 0 14 12"><path d="M3 3.4 H9 C13.6 3.4 13.6 9 9 9 H7.6" fill="none" stroke="#e8e8e8" stroke-width="1.6"/><path d="M4.4 0.2 L0.6 3.4 L4.4 6.6 Z" fill="#e8e8e8"/><path d="M0.8 11 H13" stroke="#e8e8e8" stroke-width="1.5"/></svg>
<svg style="left:10px;top:64px" width="15" height="15" viewBox="0 0 15 15"><path d="M7.5 0.4 L14.6 4 L7.5 7.6 L0.4 4 Z" fill="#e8e8e8"/><path d="M1.6 6.6 L0.4 7.4 L7.5 11 L14.6 7.4 L13.4 6.6 L7.5 9.6 Z" fill="#e8e8e8"/><path d="M1.6 10 L0.4 10.8 L7.5 14.4 L14.6 10.8 L13.4 10 L7.5 13 Z" fill="#e8e8e8"/></svg>
<div class="abs" style="left:122px;top:69px;width:5px;height:5px;border-radius:50%;background:#e8e8e8"></div>
<div class="abs" style="left:143px;top:65px;width:8px;height:13px;border:2px solid #e8e8e8"></div>
<svg style="left:165px;top:64px" width="16" height="14" viewBox="0 0 16 14"><path d="M1 7 C3.6 2.4 11.6 2.4 15 7 C11.6 11.6 3.6 11.6 1 7 Z" fill="none" stroke="#e8e8e8" stroke-width="1.8"/><circle cx="8" cy="7" r="2.7" fill="#e8e8e8"/><path d="M2 0.6 L13.6 13.4" stroke="#323232" stroke-width="3"/><path d="M2 0.6 L13.6 13.4" stroke="#e8e8e8" stroke-width="1.3"/></svg>
<svg style="left:194px;top:64px" width="11" height="14" viewBox="0 0 11 14"><path d="M2.6 6 V4 C2.6 0.4 8.4 0.4 8.4 4 V6" fill="none" stroke="#e8e8e8" stroke-width="1.5"/><rect x="0" y="5.6" width="11" height="8.4" fill="#e8e8e8"/><rect x="4.7" y="8" width="1.6" height="3.4" fill="#323232"/></svg>
<div class="abs" style="left:0;top:87px;width:224px;height:1px;background:#262626"></div>
<div class="abs" style="left:0;top:106px;width:224px;height:1px;background:#262626"></div>
<svg style="left:29px;top:91px" width="12" height="12" viewBox="0 0 12 12"><path d="M0.5 0.5 H11.5 V11.5 H4.4 L0.5 7.6 Z" fill="#9c9c9c" stroke="#dedede" stroke-width="1"/><path d="M0.5 7.6 H4.4 V11.5" fill="none" stroke="#dedede" stroke-width="1"/></svg>
<div class="lname" style="top:88px">Audio</div>
<div class="abs" style="left:145px;top:91px;width:6px;height:12px;background:#ff5a5a"></div>
<div class="abs" style="left:0;top:125px;width:224px;height:1px;background:#262626"></div>
<svg style="left:29px;top:110px" width="12" height="12" viewBox="0 0 12 12"><path d="M0.5 0.5 H11.5 V11.5 H4.4 L0.5 7.6 Z" fill="#9c9c9c" stroke="#dedede" stroke-width="1"/><path d="M0.5 7.6 H4.4 V11.5" fill="none" stroke="#dedede" stroke-width="1"/></svg>
<div class="lname" style="top:107px">Ninja Girl</div>
<div class="abs" style="left:145px;top:110px;width:6px;height:12px;background:#ff8a10"></div>
<div class="abs" style="left:0;top:144px;width:224px;height:1px;background:#262626"></div>
<svg style="left:29px;top:129px" width="12" height="12" viewBox="0 0 12 12"><path d="M0.5 0.5 H11.5 V11.5 H4.4 L0.5 7.6 Z" fill="#9c9c9c" stroke="#dedede" stroke-width="1"/><path d="M0.5 7.6 H4.4 V11.5" fill="none" stroke="#dedede" stroke-width="1"/></svg>
<div class="lname" style="top:126px">Chicken Sib<span style="font-size:7px;letter-spacing:-0.3px">…</span></div>
<div class="abs" style="left:145px;top:129px;width:6px;height:12px;background:#9a33d6"></div>
<div class="abs" style="left:0;top:163px;width:224px;height:1px;background:#262626"></div>
<svg style="left:29px;top:148px" width="12" height="12" viewBox="0 0 12 12"><path d="M0.5 0.5 H11.5 V11.5 H4.4 L0.5 7.6 Z" fill="#9c9c9c" stroke="#dedede" stroke-width="1"/><path d="M0.5 7.6 H4.4 V11.5" fill="none" stroke="#dedede" stroke-width="1"/></svg>
<div class="lname" style="top:145px">Macaw Blue</div>
<div class="abs" style="left:145px;top:148px;width:6px;height:12px;background:#ff4dff"></div>
<div class="abs" style="left:0;top:164px;width:224px;height:18px;background:#35618f"></div>
<div class="abs" style="left:0;top:182px;width:224px;height:1px;background:#262626"></div>
<svg style="left:29px;top:167px" width="12" height="12" viewBox="0 0 12 12"><path d="M0.5 0.5 H11.5 V11.5 H4.4 L0.5 7.6 Z" fill="#9c9c9c" stroke="#dedede" stroke-width="1"/><path d="M0.5 7.6 H4.4 V11.5" fill="none" stroke="#dedede" stroke-width="1"/></svg>
<div class="lname" style="top:164px">Boy Walkcy<span style="font-size:7px;letter-spacing:-0.3px">…</span></div>
<div class="abs" style="left:145px;top:167px;width:6px;height:12px;background:#00948a"></div>
<div class="abs" style="left:29px;top:185px;width:12px;height:3px;background:#9c9c9c;border-top:1px solid #dedede"></div>
<div class="abs" style="left:145px;top:185px;width:6px;height:3px;background:#00f0f0"></div>
<div class="abs" style="left:0;top:188px;width:826px;height:1px;background:#262626"></div>
<div class="abs" style="left:225px;top:54px;width:592px;height:144px;overflow:hidden">
<svg style="left:0;top:0" width="592" height="144" viewBox="0 0 592 144"><defs><pattern id="dots" x="-2" y="15" width="12" height="19" patternUnits="userSpaceOnUse"><rect x="0" y="1" width="1.3" height="1.3" fill="#262626"/></pattern></defs><rect x="0" y="0" width="592" height="33" fill="#323232"/><path d="M0 15.5 H592" stroke="#262626" stroke-width="1"/><path d="M-0.5 15 V23 M11.5 15 V23 M23.5 15 V23 M35.5 15 V23 M47.5 0 V33 M59.5 15 V23 M71.5 15 V23 M83.5 15 V23 M95.5 15 V23 M107.5 0 V33 M119.5 15 V23 M131.5 15 V23 M143.5 15 V23 M155.5 15 V23 M167.5 0 V33 M179.5 15 V23 M191.5 15 V23 M203.5 15 V23 M215.5 15 V23 M227.5 0 V33 M239.5 15 V23 M251.5 15 V23 M263.5 15 V23 M275.5 15 V23 M287.5 0 V33 M299.5 15 V23 M311.5 15 V23 M323.5 15 V23 M335.5 15 V23 M347.5 0 V33 M359.5 15 V23 M371.5 15 V23 M383.5 15 V23 M395.5 15 V23 M407.5 0 V33 M419.5 15 V23 M431.5 15 V23 M443.5 15 V23 M455.5 15 V23 M467.5 0 V33 M479.5 15 V23 M491.5 15 V23 M503.5 15 V23 M515.5 15 V23 M527.5 0 V33 M539.5 15 V23 M551.5 15 V23 M563.5 15 V23 M575.5 15 V23 M587.5 0 V33 " stroke="#222" stroke-width="1"/><text x="48.5" y="30" font-family="Liberation Sans,sans-serif" font-size="10" fill="#a6a6a6">5</text><text x="108.5" y="30" font-family="Liberation Sans,sans-serif" font-size="10" fill="#a6a6a6">10</text><text x="168.5" y="30" font-family="Liberation Sans,sans-serif" font-size="10" fill="#a6a6a6">15</text><text x="228.5" y="30" font-family="Liberation Sans,sans-serif" font-size="10" fill="#a6a6a6">20</text><text x="288.5" y="30" font-family="Liberation Sans,sans-serif" font-size="10" fill="#a6a6a6">25</text><text x="348.5" y="30" font-family="Liberation Sans,sans-serif" font-size="10" fill="#a6a6a6">30</text><text x="408.5" y="30" font-family="Liberation Sans,sans-serif" font-size="10" fill="#a6a6a6">35</text><text x="468.5" y="30" font-family="Liberation Sans,sans-serif" font-size="10" fill="#a6a6a6">40</text><text x="528.5" y="30" font-family="Liberation Sans,sans-serif" font-size="10" fill="#a6a6a6">45</text><text x="351" y="12.5" font-family="Liberation Sans,sans-serif" font-size="10" font-style="italic" fill="#a8a8a8">1s</text><rect x="0" y="34" width="592" height="18" fill="#666666"/><rect x="0" y="34" width="592" height="18" fill="url(#dots)"/><rect x="0" y="52" width="592" height="1" fill="#222"/><rect x="0" y="53" width="592" height="18" fill="#9a9a9a"/><rect x="0" y="53" width="592" height="18" fill="url(#dots)"/><rect x="0" y="71" width="592" height="1" fill="#222"/><rect x="0" y="72" width="592" height="18" fill="#9a9a9a"/><rect x="0" y="72" width="592" height="18" fill="url(#dots)"/><rect x="0" y="90" width="592" height="1" fill="#222"/><rect x="0" y="91" width="592" height="18" fill="#9a9a9a"/><rect x="0" y="91" width="592" height="18" fill="url(#dots)"/><rect x="0" y="109" width="592" height="1" fill="#222"/><rect x="0" y="110" width="592" height="18" fill="#9a9a9a"/><rect x="0" y="110" width="592" height="18" fill="url(#dots)"/><rect x="0" y="128" width="592" height="1" fill="#222"/><rect x="0" y="129" width="592" height="6" fill="#9a9a9a"/><rect x="0" y="129" width="592" height="6" fill="url(#dots)"/><rect x="0" y="33" width="592" height="1" fill="#222"/><circle cx="6" cy="45" r="2.3" fill="none" stroke="#3a3a3a" stroke-width="1.1"/><rect x="163.5" y="43" width="1.6" height="4.6" fill="#222"/><path d="M167.5 34 V52" stroke="#3a3a3a" stroke-width="1"/><circle cx="174" cy="45" r="2.3" fill="none" stroke="#3a3a3a" stroke-width="1.1"/><path d="M168 42.5H592" stroke="#f06a30" stroke-width="1"/><path d="M258 42.3V42.9M259 42.0V42.8M260 42.0V43.0M261 41.9V42.8M262 41.7V43.1M263 41.7V43.1M264 41.6V43.6M265 41.4V43.7M266 42.0V43.2M267 41.3V44.0M268 41.5V44.3M269 40.6V43.2M270 40.7V43.7M271 41.6V43.6M272 40.8V43.9M273 41.0V43.6M274 40.0V44.7M275 39.4V45.5M276 40.5V46.8M277 41.3V45.2M278 40.2V45.3M279 40.8V47.0M280 39.7V43.9M281 38.7V44.2M282 39.0V45.2M283 38.9V47.6M284 38.0V45.5M285 38.0V46.3M286 39.8V44.3M287 39.0V45.9M288 37.8V47.3M289 39.1V44.9M290 38.2V43.7M291 41.0V45.6M292 39.4V44.1M293 39.4V46.5M294 40.2V44.9M295 40.7V44.5M296 38.5V44.7M297 38.6V46.3M298 39.7V44.3M299 38.6V45.0M300 40.3V44.4M301 38.7V44.9M302 40.7V44.8M303 41.2V45.2M304 40.3V44.2M305 39.5V45.6M306 41.6V44.8M307 40.9V45.8M308 39.7V43.9M309 41.1V43.7M310 39.4V44.0M311 40.4V44.3M312 40.4V44.5M313 40.3V43.4M314 40.4V43.7M315 40.9V43.8M316 41.4V44.1M317 41.1V43.7M318 40.7V44.1M319 41.9V43.5M320 41.2V44.5M321 40.5V43.9M322 41.9V44.3M323 41.3V43.9M324 40.9V44.0M325 41.2V44.5M326 41.4V43.6M327 40.7V43.3M328 41.5V44.3M329 41.9V44.3M330 41.0V43.6M331 41.6V44.1M332 40.7V43.2M333 41.4V43.7M334 41.4V43.4M335 41.9V43.6M336 41.2V43.0M337 41.9V43.7M338 41.4V43.5M339 42.2V43.5M340 41.4V43.6M341 41.7V42.8M342 41.7V42.9M343 41.9V43.2M344 42.0V42.7M345 42.2V43.0M400 42.3V42.8M401 42.2V42.8M402 42.3V42.9M403 42.4V42.8M404 42.3V42.9M405 42.1V42.7M406 41.8V42.9M407 41.8V43.0M408 41.6V44.1M409 41.6V43.3M410 41.5V43.3M411 41.1V43.9M412 41.9V43.2M413 41.2V44.2M414 41.2V43.5M415 40.7V43.0M416 42.0V44.0M417 41.5V43.0M418 41.3V44.4M419 41.3V43.5M420 41.9V43.1M421 40.7V43.7M422 40.6V43.1M423 41.6V43.1M424 41.4V43.1M425 41.6V43.7M426 41.5V43.1M427 41.9V44.7M428 41.6V43.9M429 41.2V44.0M430 41.8V43.6M431 41.7V44.1M432 40.2V44.2M433 40.3V43.5M434 41.8V44.2M435 40.9V44.2M436 41.1V44.4M437 40.4V45.0M438 41.2V44.1M439 40.1V43.7M440 41.6V43.9M441 41.6V44.8M442 40.0V43.9M443 41.5V43.4M444 41.2V43.4M445 40.8V44.5M446 41.2V43.4M447 40.2V43.4M448 41.3V43.9M449 40.9V43.5M450 40.8V44.0M451 40.1V44.5M452 39.7V44.7M453 40.1V44.5M454 40.8V45.1M455 40.3V45.3M456 40.2V44.8M457 41.2V45.0M458 41.0V43.5M459 41.7V43.6M460 41.3V44.6M461 41.2V43.3M462 40.3V44.3M463 41.8V43.3M464 41.6V43.9M465 40.2V45.0M466 40.7V43.6M467 41.1V43.8M468 41.3V43.1M469 40.9V44.6M470 40.6V43.3M471 41.0V43.4M472 40.7V43.8M473 40.4V44.4M474 41.8V43.6M475 40.5V43.8M476 41.3V43.7M477 40.8V44.5M478 41.2V44.5M479 41.0V43.2M480 40.7V43.7M481 41.9V44.6M482 41.9V44.0M483 41.1V44.6M484 41.2V43.5M485 41.3V43.5M486 40.6V44.0M487 40.0V43.8M488 40.8V43.9M489 39.0V45.6M490 39.2V45.2M491 40.3V43.9M492 38.8V45.1M493 41.3V44.1M494 41.1V46.0M495 38.4V44.3M496 38.8V44.7M497 39.2V46.4M498 39.5V46.0M499 40.4V43.5M500 40.2V45.0M501 41.2V44.4M502 41.0V43.4M503 41.1V44.1M504 40.9V44.6M505 41.2V44.9M506 40.6V44.6M507 40.9V44.1M508 41.2V44.2M509 41.5V43.8M510 41.1V43.6M511 41.7V43.0M512 42.0V43.4M513 41.4V43.9M514 41.2V43.3M515 41.0V43.2M516 41.2V43.0M517 41.2V43.7M518 40.9V44.0M519 41.3V43.9M520 41.2V43.6M521 41.8V43.5M522 41.0V43.2M523 40.9V43.6M524 41.6V42.9M525 41.6V43.1M526 41.2V44.1M527 40.9V43.7M528 41.5V43.1M529 41.1V43.7M530 41.0V43.5M531 40.6V43.4M532 41.4V43.5M533 40.8V44.7M534 41.5V44.4M535 40.2V43.7M536 41.6V44.5M537 39.7V45.4M538 39.8V44.4M539 40.4V44.8M540 39.0V44.3M541 40.7V45.3M542 38.5V44.1M543 41.4V43.9M544 39.7V45.5M545 40.9V44.1M546 39.6V45.5M547 39.4V45.7M548 41.4V44.8M549 39.3V46.0M550 40.8V45.5M551 40.1V45.5M552 41.2V44.8M553 40.0V44.2M554 41.7V43.5M555 41.6V43.3M556 41.7V44.1M557 41.8V44.3M558 40.8V44.3M559 40.8V44.1M560 40.6V44.4M561 41.1V44.4M562 41.9V43.1M563 41.9V43.3M564 41.4V43.7M565 41.0V44.1M566 41.9V43.6M567 41.1V43.6M568 41.8V44.0M569 41.3V44.2M570 41.1V44.7M571 40.3V43.2M572 40.6V44.4M573 41.4V43.3M574 41.0V43.7M575 40.6V44.8M576 41.2V43.6M577 41.0V44.3M578 40.5V44.1M579 41.4V43.7M580 40.5V44.0M581 41.9V43.8M582 41.6V44.1M583 41.9V43.5M584 41.8V43.8M585 40.5V43.8M586 41.5V44.3M587 41.9V43.5M588 40.9V43.0M589 41.0V43.4M590 42.0V43.3M591 41.5V43.4" stroke="#f06a30" stroke-width="1.1" fill="none"/><ellipse cx="6" cy="64" rx="2.3" ry="2.8" fill="#161616"/><ellipse cx="6" cy="83" rx="2.3" ry="2.8" fill="#161616"/><ellipse cx="6" cy="102" rx="2.3" ry="2.8" fill="#161616"/><ellipse cx="6" cy="121" rx="2.3" ry="2.8" fill="#161616"/><path d="M5.5 30 V144" stroke="#3d8be8" stroke-width="1.2"/><path d="M0 1 H11 V29 L5.5 33 L0 29 Z" fill="#3a7fd8"/></svg>
</div>
<div class="abs" style="left:817px;top:87px;width:8px;height:102px;background:#5a5a5a"></div>
<div class="abs" style="left:817px;top:87px;width:8px;height:56px;background:#d0d0d0"></div>
<div class="abs" style="left:225px;top:190px;width:592px;height:8px;background:#5a5a5a"></div>
<div class="abs" style="left:225px;top:190px;width:37px;height:8px;background:#d0d0d0"></div>
</div>
<div id="rp" class="abs">
  <div class="abs" style="left:0;top:0;width:304px;height:11px;background:#2a2a2a"></div>
  <svg style="left:291px;top:3px" width="8" height="6" viewBox="0 0 8 6"><path d="M0.8 0.5 L3.2 3 L0.8 5.5 M4.6 0.5 L7 3 L4.6 5.5" fill="none" stroke="#d8d8d8" stroke-width="1.1"/></svg>
  <div class="abs" style="left:0;top:11px;width:304px;height:18px;background:#2b2b2b;border-top:1px solid #222;border-bottom:1px solid #222"></div>
  <div class="tab" style="left:0;width:37px;background:#323232;color:#f4f4f4;height:18px">资源</div>
  <div class="tab" style="left:37px;width:38px;top:12px;height:16px;line-height:17px">属性</div>
  <div class="tab" style="left:75px;width:38px;top:12px;height:16px;line-height:17px">颜色</div>
  <div class="tab" style="left:113px;width:37px;top:12px;height:16px;line-height:17px">对齐</div>
  <div class="tab" style="left:150px;width:35px;top:12px;height:16px;line-height:17px;text-align:left;padding-left:7px">库</div>
  <svg style="left:288px;top:16px" width="11" height="8" viewBox="0 0 11 8"><path d="M0 0.5 H11 M0 2.8 H11 M0 5.1 H11 M0 7.4 H11" stroke="#bdbdbd" stroke-width="1"/></svg>
  <!-- buttons -->
  <div class="abs" style="left:79px;top:46px;width:63px;height:32px;background:#4a4a4a;border-radius:5px;text-align:center;line-height:34px;font-size:14px;color:#f0f0f0">默认</div>
  <div class="abs" style="left:166px;top:46px;height:32px;line-height:34px;font-size:14px;color:#f0f0f0">自定义</div>
  <!-- search -->
  <div class="abs" style="left:17px;top:95px;width:232px;height:32px;background:#262626;border:1px solid #414141;border-radius:4px"></div>
  <svg style="left:28px;top:103px" width="17" height="17" viewBox="0 0 17 17"><circle cx="6.6" cy="6.6" r="5.4" fill="none" stroke="#d8d8d8" stroke-width="1.5"/><path d="M10.6 10.6 L16 16" stroke="#d8d8d8" stroke-width="1.8"/></svg>
  <div class="abs" style="left:62px;top:95px;height:32px;line-height:33px;font-size:12px;color:#787878">搜索</div>
  <svg style="left:264px;top:102px" width="18" height="18" viewBox="0 0 18 18"><rect x="0" y="0.6" width="3.6" height="3.2" fill="#cfcfcf"/><rect x="0" y="7.2" width="3.6" height="3.2" fill="#cfcfcf"/><rect x="0" y="13.8" width="3.6" height="3.2" fill="#cfcfcf"/><rect x="5.6" y="1.2" width="12" height="2" fill="#cfcfcf"/><rect x="5.6" y="7.8" width="12" height="2" fill="#cfcfcf"/><rect x="5.6" y="14.4" width="12" height="2" fill="#cfcfcf"/></svg>
  <div class="abs" style="left:0;top:142px;width:304px;height:2px;background:#262626"></div>
  <!-- section -->
  <svg style="left:17px;top:160px" width="10" height="7" viewBox="0 0 10 7"><path d="M0.8 0.8 L5 5.2 L9.2 0.8" fill="none" stroke="#9a9a9a" stroke-width="1.6"/></svg>
  <div class="abs" style="left:35px;top:154px;height:20px;line-height:20px;font-size:14px;font-weight:bold;color:#d6d6d6">动画</div>
  <div class="dd" style="top:191px">字符</div>
  <svg style="left:225px;top:204px" width="10" height="7" viewBox="0 0 10 7"><path d="M0.8 0.8 L5 5.2 L9.2 0.8" fill="none" stroke="#dcdcdc" stroke-width="1.7"/></svg>
  <svg style="left:264px;top:199px" width="16" height="17" viewBox="0 0 16 17"><path d="M0.4 0.4 H15.6 L9.6 8 V15 L6.4 16.6 V8 Z" fill="#d8d8d8"/></svg>
  <div class="dd" style="top:232px">对象</div>
  <svg style="left:225px;top:245px" width="10" height="7" viewBox="0 0 10 7"><path d="M0.8 0.8 L5 5.2 L9.2 0.8" fill="none" stroke="#dcdcdc" stroke-width="1.7"/></svg>
  <!-- thumbs viewport: abs y 323..627 → rel 279..583 ; abs x 906 → rel 22 -->
  <div class="abs" style="left:22px;top:279px;width:262px;height:304px;overflow:hidden">
    <div class="thumb" style="left:0;top:-43px"><!--T0--><svg width="128" height="72" viewBox="0 0 128 72" style="left:0;top:0"><use href="#dog" transform="translate(-46.1 -56) scale(0.382)"/></svg><!--/T0--></div>
    <div class="thumb" style="left:132px;top:-43px"><!--T1--><svg width="128" height="72" viewBox="0 0 128 72" style="left:0;top:0"><path d="M80 48 C84 46 86 50 83 52" fill="none" stroke="#F08898" stroke-width="1.2"/><rect x="55" y="64" width="3" height="7" fill="#EC7088"/><rect x="60" y="65" width="3" height="6" fill="#EC7088"/><rect x="66" y="64" width="3" height="6" fill="#EC7088"/><rect x="71" y="64" width="3" height="6" fill="#EC7088"/><ellipse cx="62" cy="51" rx="20.5" ry="17" fill="#F9A3AB"/><ellipse cx="55.5" cy="48.5" rx="7" ry="4.6" fill="#FBC0C4" stroke="#F08898" stroke-width="0.6"/><circle cx="53.5" cy="48.5" r="1" fill="#D86078"/><circle cx="57.5" cy="48.5" r="1" fill="#D86078"/><circle cx="59" cy="59" r="0.9" fill="#B05060"/></svg><!--/T1--></div>
    <div class="thumb" style="left:0;top:33px"><!--T2--><svg width="128" height="72" viewBox="0 0 128 72" style="left:0;top:0"><use href="#ninja" transform="translate(-201.4 -123) scale(0.3575)"/></svg><!--/T2--></div>
    <div class="thumb" style="left:132px;top:33px"><!--T3--><svg viewBox="18 18 1140 640" width="128" height="72" style="left:0;top:0">
<path d="M1146 40 L1128 100 L800 430 L760 395 L1100 60 Z" fill="#E8E8E8" stroke="#333" stroke-width="10"/>
<path d="M1130 60 L790 405" stroke="#888" stroke-width="9"/>
<path d="M790 385 L700 530 L672 512 L760 372 Z" fill="#8B3A1A" stroke="#3A1A0A" stroke-width="9"/>
<path d="M715 400 L800 462" stroke="#4A3A2A" stroke-width="18"/>
<path d="M180 600 L640 600 L630 638 L490 638 L480 618 L330 618 L320 638 L185 638 Z" fill="#6B3415"/>
<path d="M110 510 C105 478 130 466 160 472 L640 440 C670 438 700 440 716 452 L700 520 C690 572 640 602 560 602 L200 602 C140 602 112 566 110 510 Z" fill="#E2591C" stroke="#7A260A" stroke-width="9"/>
<path d="M455 560 L460 600" stroke="#A83A10" stroke-width="8"/>
<path d="M66 222 C110 208 170 216 230 232 C280 246 330 246 362 238 C420 228 480 226 506 214 C516 176 546 158 580 168 C640 190 692 228 702 268 C694 300 664 320 644 330 C664 372 664 424 644 450 C560 506 450 524 400 519 C300 514 200 494 150 470 C130 486 110 470 100 452 C84 476 66 462 62 440 C40 432 24 400 30 372 C20 350 40 320 60 300 C50 280 70 262 98 262 Z" fill="#A48B69" stroke="#2E2014" stroke-width="11" stroke-linejoin="round"/>
<path d="M60 350 C90 318 130 308 170 320 C192 352 186 402 150 442 C120 462 90 464 70 456 Z" fill="#8B7355"/>
<path d="M130 320 C150 330 160 350 160 375" fill="none" stroke="#2E2014" stroke-width="8"/>
<path d="M600 280 C630 258 670 248 696 262 C686 296 656 316 626 326 Z" fill="#6E583E"/>
<path d="M258 360 C258 306 320 282 382 298 C414 320 414 362 392 388 C350 410 290 404 258 360 Z" fill="#8B7355" stroke="#20140C" stroke-width="11"/>
<path d="M272 370 C320 386 366 380 400 356 C398 388 350 406 300 398 Z" fill="#fff"/>
<path d="M483 300 C488 260 540 242 587 260 C608 290 598 332 562 348 C525 354 494 338 483 300 Z" fill="#8B7355" stroke="#20140C" stroke-width="11"/>
<path d="M490 316 C525 330 560 328 592 310 C588 340 550 352 514 344 Z" fill="#fff"/>
<path d="M440 352 C500 368 562 400 604 436 C562 474 470 498 382 495 C382 440 404 390 440 352 Z" fill="#8C4A2B" stroke="#2E140A" stroke-width="10"/>
<path d="M195 440 C220 418 262 424 292 446" fill="none" stroke="#2E2014" stroke-width="9"/>
</svg><!--/T3--></div>
    <div class="thumb" style="left:0;top:109px"><!--T4--><svg viewBox="18 18 1140 640" width="128" height="72" style="left:0;top:0">
<ellipse cx="565" cy="645" rx="180" ry="9" fill="#A8A68C"/>
<path d="M420 590 L480 575 L485 610 L415 612 Z M715 585 L760 580 L775 605 L712 608 Z" fill="#1E2638"/>
<path d="M420 380 L260 330 L245 365 L400 430 Z M790 405 L920 330 L900 290 L770 360 Z" fill="#263250"/>
<path d="M245 300 L310 290 L330 380 L250 390 Z M850 290 L935 300 L920 370 L845 360 Z" fill="#2A4A78"/>
<path d="M300 300 L195 180 L140 225 L235 330 Z" fill="#3A8A72" stroke="#1E3A30" stroke-width="9"/>
<path d="M880 285 L945 130 L1000 155 L930 305 Z" fill="#3A8A72" stroke="#1E3A30" stroke-width="9"/>
<path d="M232 232 L262 268 M905 190 L892 232" stroke="#D82020" stroke-width="10"/>
<ellipse cx="172" cy="195" rx="52" ry="28" transform="rotate(-40 172 195)" fill="#E8E8E8" stroke="#555" stroke-width="9"/>
<ellipse cx="955" cy="135" rx="52" ry="28" transform="rotate(25 955 135)" fill="#E8E8E8" stroke="#555" stroke-width="9"/>
<path d="M150 170 L125 135 M965 105 L975 60" stroke="#777" stroke-width="8"/>
<circle cx="120" cy="128" r="20" fill="#F4F4F4" stroke="#888" stroke-width="4"/><circle cx="975" cy="50" r="20" fill="#F4F4F4" stroke="#888" stroke-width="4"/>
<ellipse cx="585" cy="475" rx="200" ry="118" fill="#2E5B42" stroke="#142A1E" stroke-width="10"/>
<path d="M650 440 C700 410 760 420 780 450 C790 500 740 530 690 525 C650 510 640 470 650 440 Z" fill="#4C8C62"/>
<path d="M398 510 C470 560 700 565 775 515 C765 560 700 590 585 592 C480 590 410 560 398 510 Z" fill="#6B2222"/>
<path d="M400 500 C480 548 690 552 772 505" fill="none" stroke="#DA9420" stroke-width="14"/>
<path d="M400 495 C450 480 490 450 505 410" fill="none" stroke="#DA9420" stroke-width="10"/>
<path d="M440 285 C480 340 560 380 660 395 L640 445 C540 430 450 390 415 330 Z" fill="#8C2B2B" stroke="#3A1010" stroke-width="8"/>
<path d="M475 215 C520 180 640 165 760 168 C830 172 855 215 850 290 C845 360 810 405 760 405 C690 405 620 385 570 360 C510 350 478 310 475 215 Z" fill="#8E86CE" stroke="#2A2850" stroke-width="9"/>
<path d="M455 180 L490 165 L500 205 L465 210 Z" fill="#4A48A0"/>
<circle cx="512" cy="213" r="23" fill="#fff" stroke="#222" stroke-width="8"/><circle cx="548" cy="180" r="23" fill="#fff" stroke="#222" stroke-width="8"/>
<path d="M505 285 C510 262 535 260 545 280 M650 225 C655 205 680 205 688 222" fill="none" stroke="#2A2850" stroke-width="10"/>
</svg><!--/T4--></div>
    <div class="thumb" style="left:132px;top:109px"><!--T5--><svg viewBox="18 18 1140 640" width="128" height="72" style="left:0;top:0">
<path d="M700 45 C700 20 760 15 768 55" fill="none" stroke="#8B5A0A" stroke-width="16" stroke-linecap="round"/>
<path d="M700 45 L722 372" stroke="#8B5A0A" stroke-width="14"/>
<circle cx="724" cy="388" r="23" fill="#E8DA20"/>
<path d="M745 258 C790 262 820 300 825 350" fill="none" stroke="#F7D6C4" stroke-width="34" stroke-linecap="round"/>
<path d="M790 365 L870 362 L880 385 L795 392 Z" fill="#fff"/><path d="M785 392 L885 378 L888 392 L790 405 Z" fill="#7A4A10"/>
<path d="M505 520 C500 560 510 600 540 625" fill="none" stroke="#F7D6C4" stroke-width="34" stroke-linecap="round"/>
<path d="M480 625 L585 625 L590 645 L478 645 Z" fill="#fff"/><path d="M476 642 L595 642 L595 658 L476 658 Z" fill="#7A4A10"/>
<path d="M470 470 L580 490 L545 555 L478 525 Z" fill="#8B5A0A"/>
<ellipse cx="610" cy="355" rx="128" ry="150" transform="rotate(28 610 355)" fill="#8B5A0A"/>
<path d="M600 215 C680 260 700 360 640 460 C690 420 720 330 690 260 C670 225 640 210 600 215 Z" fill="#6E4406"/>
<path d="M575 165 L640 125 L665 165 L600 205 Z" fill="#8B5A0A"/>
<path d="M690 180 C700 150 730 150 735 180 C735 205 700 215 690 180 Z" fill="#F7D6C4"/>
<path d="M335 330 C290 340 270 380 290 410 C310 440 350 445 365 420" fill="none" stroke="#F7D6C4" stroke-width="32" stroke-linecap="round"/>
<path d="M325 318 L365 305 L380 345 L345 362 Z" fill="#8B5A0A"/>
<ellipse cx="462" cy="232" rx="142" ry="112" fill="#F7D2BE"/>
<path d="M340 200 C350 165 375 145 400 140 C380 170 365 195 350 225 Z M585 210 C580 175 560 150 535 140 C550 170 562 200 570 228 Z" fill="#fff"/>
<path d="M372 290 L550 290 C540 350 500 410 462 432 C420 410 385 350 372 290 Z" fill="#fff"/>
<path d="M400 305 L522 305 C520 340 495 355 462 355 C428 355 402 340 400 305 Z" fill="#A82222"/>
<path d="M425 335 C445 325 480 325 500 335 C490 350 440 350 425 335 Z" fill="#F08A8A"/>
<path d="M335 208 L400 238 M590 212 L520 236" stroke="#333" stroke-width="8"/>
<circle cx="422" cy="245" r="31" fill="#3A3A44"/><circle cx="497" cy="240" r="31" fill="#3A3A44"/>
<circle cx="460" cy="276" r="30" fill="#F3A0A0"/>
</svg><!--/T5--></div>
    <div class="thumb" style="left:0;top:185px"><!--T6--><svg viewBox="18 18 1140 640" width="128" height="72" style="left:0;top:0">
<path d="M780 200 L960 200 C1050 200 1100 260 1100 350 L1100 580 L780 580 Z" fill="#FF7A10" stroke="#FF9A30" stroke-width="8"/>
<path d="M780 580 L970 580 C975 620 950 645 900 645 L780 645 Z" fill="#FFCE1A" stroke="#FF9A30" stroke-width="6"/>
<rect x="786" y="204" width="78" height="376" fill="#FFD21E"/><rect x="985" y="215" width="42" height="365" fill="#FFD21E"/>
<path d="M825 215 L960 210 C1040 215 1080 260 1085 330 C1040 370 900 365 840 300 C825 275 822 240 825 215 Z" fill="#fff" opacity="0.35"/>
<path d="M452 152 L510 38 L560 120 L560 28 L612 20 L618 110 L660 62 L716 100 L650 165 Z" fill="#5E9A34" stroke="#3F6E22" stroke-width="7" stroke-linejoin="round"/>
<path d="M270 520 L75 460 L90 580 L200 560 L130 600 L195 655 L275 610 Z M140 440 L205 358 L290 470 Z" fill="#5E9A34" stroke="#3F6E22" stroke-width="7" stroke-linejoin="round"/>
<rect x="245" y="160" width="535" height="500" rx="62" fill="#5E9A34" stroke="#3F6E22" stroke-width="7"/>
<path d="M249 560 L776 560 L776 600 C776 640 750 658 720 658 L305 658 C270 658 249 635 249 600 Z" fill="#4F8A2A"/>
<path d="M282 346 L458 374 L370 546 L302 522 L320 470 L282 460 L300 420 L262 410 Z" fill="#5E9A34" stroke="#3F6E22" stroke-width="7" stroke-linejoin="round"/>
<ellipse cx="655" cy="365" rx="90" ry="85" fill="#4F8A2A"/>
<circle cx="660" cy="346" r="76" fill="#050505"/><circle cx="680" cy="320" r="36" fill="#fff"/><circle cx="624" cy="386" r="14" fill="#fff"/>
</svg><!--/T6--></div>
    <div class="thumb" style="left:132px;top:185px"><!--T7--><svg viewBox="18 18 1140 640" width="128" height="72" style="left:0;top:0">
<g fill="#C2E2DE" stroke="#333" stroke-width="6"><circle cx="410" cy="495" r="112"/><circle cx="755" cy="495" r="112"/></g>
<g stroke="#7CC8C0" stroke-width="4"><path d="M410 385 V605 M300 495 H520 M332 417 L488 573 M488 417 L332 573 M755 385 V605 M645 495 H865 M677 417 L833 573 M833 417 L677 573"/></g>
<path d="M290 350 H470 M330 352 L352 380 L470 360" fill="none" stroke="#FF80B8" stroke-width="8"/>
<rect x="315" y="282" width="106" height="64" fill="#B5CE90"/><rect x="360" y="270" width="14" height="76" fill="#E8F0B8"/>
<path d="M410 495 L552 470 L552 505 Z" fill="#FF80B8"/>
<path d="M482 312 L552 492 M350 395 L410 495 M552 440 C610 400 640 330 705 318 M552 470 C620 420 660 350 715 335 M640 240 C680 240 700 280 705 318 L755 495" fill="none" stroke="#FF80B8" stroke-width="9"/>
<path d="M610 238 L652 238" stroke="#222" stroke-width="14" stroke-linecap="round"/>
<path d="M440 300 L492 296" stroke="#222" stroke-width="14" stroke-linecap="round"/>
<path d="M346 60 C370 30 470 20 540 35 C565 50 560 80 535 95 C500 100 470 120 420 130 C370 130 335 100 346 60 Z" fill="#C2185B"/>
<circle cx="522" cy="92" r="36" fill="#F0901A"/>
<path d="M500 98 C515 112 535 112 548 98 C540 122 508 122 500 98 Z" fill="#fff"/>
<path d="M472 140 L520 150 L512 245 L452 240 Z" fill="#A2D242"/>
<path d="M505 140 L530 148 L540 215 L620 236 L612 248 L520 228 Z" fill="#F0901A"/>
<path d="M450 245 L600 240 L575 300 L590 510 L562 512 L520 330 L455 285 Z" fill="#1A6AA2"/>
<path d="M520 330 L545 400 L520 420 Z" fill="#F0901A"/>
<path d="M558 512 L598 512 L598 540 L565 542 Z" fill="#F0901A"/>
</svg><!--/T7--></div>
    <div class="thumb" style="left:0;top:261px"><!--T8--><svg width="128" height="72" viewBox="0 0 128 72" style="left:0;top:0"><path d="M20 43 C30 39 50 38 70 37.5 C85 37 100 38 110 43 Z" fill="#E6C220"/><path d="M26 42 L30 39.5 L36 41 L42 39 L50 40.5 L58 38.5 L66 40 L74 38 L82 39.5 L90 38 L96 40 L98 43 L26 43 Z" fill="#6BAA3A" opacity="0.75"/><path d="M92 34 C95 29 100 27 104 30 C112 32 122 38 127 43 L96 43 C93 40 91 37 92 34 Z" fill="#4A9A40"/><path d="M100 32 C104 33 108 34 111 37" fill="none" stroke="#C0407A" stroke-width="1"/><path d="M49 12 C60 14 80 19 90 25 C94 28 94 31 92 33 C89 36 84 37.5 80 37 C74 38 69 37 66 35 C64 31 62 27 60 23 C57 19 53 15 49 12 Z" fill="#D9498B"/><path d="M78 22 C84 26 88 30 86 35 C82 33 79 28 78 22 Z" fill="#B83874"/></svg><!--/T8--></div>
    <div class="thumb" style="left:132px;top:261px"><!--T9--><svg width="128" height="72" viewBox="0 0 128 72" style="left:0;top:0"><use href="#chicks" transform="translate(-33.7 -142.2) scale(0.395)"/></svg><!--/T9--></div>
  </div>
  <div class="abs" style="left:294px;top:279px;width:8px;height:304px;background:#585858"></div>
  <div class="abs" style="left:294px;top:312px;width:8px;height:39px;background:#d0d0d0"></div>
  <div class="abs" style="left:197px;top:598px;height:20px;line-height:21px;font-size:13.6px;color:#d8d8d8;white-space:nowrap">显示下一个</div>
  <svg style="left:273px;top:604px" width="9" height="10" viewBox="0 0 9 10"><path d="M4.5 0 V8.4 M1 5 L4.5 8.8 L8 5" fill="none" stroke="#d8d8d8" stroke-width="1.8"/></svg>
  <div class="abs" style="left:0;top:640px;width:304px;height:2px;background:#262626"></div>
  <svg style="left:17px;top:656px" width="7" height="10" viewBox="0 0 7 10"><path d="M0.8 0.8 L5.2 5 L0.8 9.2" fill="none" stroke="#9a9a9a" stroke-width="1.6"/></svg>
  <div class="abs" style="left:34px;top:651px;height:20px;line-height:20px;font-size:14px;font-weight:bold;color:#d6d6d6">静态</div>
  <div class="abs" style="left:0;top:681px;width:304px;height:2px;background:#262626"></div>
  <div class="abs" style="left:0;top:686px;width:304px;height:2px;background:#262626"></div>
  <!-- cloud -->
  <svg style="left:23px;top:696px" width="19" height="18" viewBox="0 0 19 18"><path d="M4.6 11.6 C1.6 11.6 0.4 9.6 0.6 8 C0.8 6.2 2.4 5.2 3.8 5.4 C4.2 2.4 7 0.6 9.8 0.8 C12.4 1 14 2.8 14.4 5 C16.8 5 18.6 6.4 18.4 8.6 C18.2 10.6 16.6 11.6 14.8 11.6 Z" fill="#6a6a6a"/><path d="M9.5 8 V15" stroke="#323232" stroke-width="3"/><path d="M9.5 8.6 V15" stroke="#6a6a6a" stroke-width="1.6"/><path d="M6.6 13.8 L9.5 17.4 L12.4 13.8 Z" fill="#6a6a6a"/></svg>
  <!-- trash -->
  <svg style="left:265px;top:695px" width="15" height="18" viewBox="0 0 15 18"><path d="M5 0 H10 V1.6 H15 V3.6 H0 V1.6 H5 Z" fill="#cfcfcf"/><path d="M1.4 4.8 H13.6 L12.4 18 H2.6 Z" fill="#cfcfcf"/><path d="M4.8 6.6 V16 M7.5 6.6 V16 M10.2 6.6 V16" stroke="#323232" stroke-width="1"/></svg>
</div>
</body>
</html>
